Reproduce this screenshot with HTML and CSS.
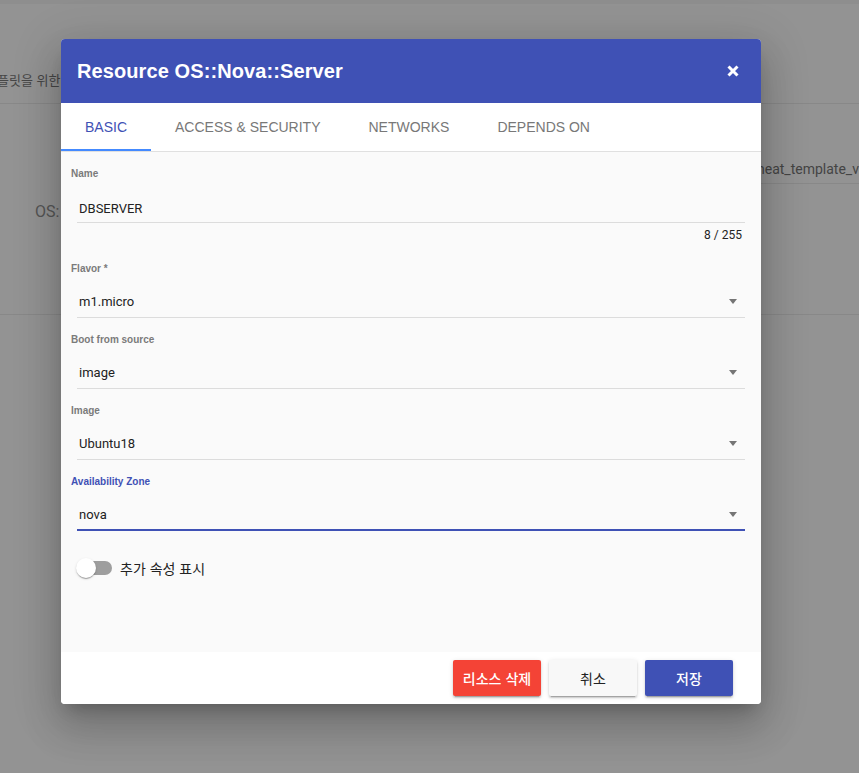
FILE: index.html
```html
<!DOCTYPE html>
<html lang="ko">
<head>
<meta charset="utf-8">
<title>Resource OS::Nova::Server</title>
<link rel="stylesheet" href="styles.css">
</head>
<body>
<div class="page">
  <div class="topband"></div>
  <div class="row1"><span class="bg-text-kr">플릿을 위한</span></div>
  <div class="section2">
    <div class="os-label">OS:</div>
    <div class="heat-field">heat_template_version</div>
  </div>
</div>

<div class="modal">
  <div class="modal-header">
    <div class="modal-title">Resource OS::Nova::Server</div>
    <svg class="close-icon" width="12" height="12" viewBox="0 0 12 12" aria-hidden="true">
      <path d="M1.5 1.5 L10.5 10.5 M10.5 1.5 L1.5 10.5" stroke="#ffffff" stroke-width="3" stroke-linecap="butt"/>
    </svg>
  </div>
  <div class="tabs">
    <div class="tab active">BASIC</div>
    <div class="tab">ACCESS &amp; SECURITY</div>
    <div class="tab">NETWORKS</div>
    <div class="tab">DEPENDS ON</div>
  </div>
  <div class="modal-body">
    <div class="field field-name">
      <div class="label">Name</div>
      <div class="input input-name"><span class="value">DBSERVER</span></div>
      <div class="counter">8 / 255</div>
    </div>
    <div class="field">
      <div class="label">Flavor *</div>
      <div class="input"><span class="value">m1.micro</span><span class="arrow"></span></div>
    </div>
    <div class="field">
      <div class="label">Boot from source</div>
      <div class="input"><span class="value">image</span><span class="arrow"></span></div>
    </div>
    <div class="field">
      <div class="label">Image</div>
      <div class="input"><span class="value">Ubuntu18</span><span class="arrow"></span></div>
    </div>
    <div class="field">
      <div class="label label-focus">Availability Zone</div>
      <div class="input input-focus"><span class="value">nova</span><span class="arrow"></span></div>
    </div>
    <div class="switch-row">
      <div class="switch-track"><div class="switch-thumb"></div></div>
      <span class="switch-label">추가 속성 표시</span>
    </div>
  </div>
  <div class="modal-footer">
    <button class="btn btn-red">리소스 삭제</button>
    <button class="btn btn-light">취소</button>
    <button class="btn btn-blue">저장</button>
  </div>
</div>
</body>
</html>
```

FILE: styles.css
```css
html, body {
  margin: 0;
  padding: 0;
}
body {
  width: 859px;
  height: 773px;
  overflow: hidden;
  background: #939393;
  font-family: "Liberation Sans", Arial, sans-serif;
  position: relative;
}
.page {
  width: 859px;
}
.topband {
  height: 4px;
  background: #8e8e8e;
}
.row1 {
  height: 100px;
  box-sizing: border-box;
  padding-top: 64px;
  border-bottom: 1px solid #888888;
  white-space: nowrap;
  overflow: hidden;
}
.bg-text-kr {
  display: block;
  margin-left: -3px;
  line-height: 24px;
  font-family: "Noto Sans CJK KR", sans-serif;
  font-size: 13px;
  color: #464646;
}
.section2 {
  height: 211px;
  box-sizing: border-box;
  border-bottom: 1px solid #888888;
  display: flex;
  align-items: flex-start;
  overflow: hidden;
}
.os-label {
  margin-left: 35px;
  margin-top: 96px;
  line-height: 24px;
  font-size: 16px;
  font-family: Roboto, sans-serif;
  color: #555555;
  white-space: nowrap;
}
.heat-field {
  margin-left: auto;
  margin-top: 55px;
  width: 111px;
  flex: none;
  box-sizing: border-box;
  padding-left: 9px;
  padding-bottom: 4px;
  line-height: 20px;
  font-family: Roboto, sans-serif;
  font-size: 14px;
  color: #444444;
  white-space: nowrap;
  overflow: hidden;
  border-bottom: 1px solid #888888;
}

/* modal */
.modal {
  position: absolute;
  left: 61px;
  top: 39px;
  width: 700px;
  border-radius: 4px;
  overflow: hidden;
  background: #ffffff;
  box-shadow: 0 11px 15px -7px rgba(0,0,0,.2), 0 24px 38px 3px rgba(0,0,0,.14), 0 9px 46px 8px rgba(0,0,0,.12);
}
.modal-header {
  height: 64px;
  background: #3f51b5;
  display: flex;
  align-items: center;
  justify-content: space-between;
  padding: 0 22px 0 16px;
}
.modal-title {
  color: #ffffff;
  font-weight: bold;
  font-size: 20px;
  letter-spacing: 0.1px;
  margin-top: 1px;
}
.close-icon {
  display: block;
}
.tabs {
  height: 48px;
  background: #ffffff;
  border-bottom: 1px solid #e0e0e0;
  display: flex;
}
.tab {
  height: 48px;
  box-sizing: border-box;
  padding: 0 24px;
  display: flex;
  align-items: center;
  font-size: 14px;
  color: #787878;
  border-bottom: 2px solid transparent;
  padding-top: 2px;
}
.tab.active {
  color: #3f51b5;
  border-bottom-color: #448aff;
}
.modal-body {
  height: 500px;
  box-sizing: border-box;
  background: #fafafa;
  padding: 16px 16px 0 10px;
}
.field {
  margin-bottom: 16px;
}
.field-name {
  margin-bottom: 21px;
}
.label {
  height: 12px;
  line-height: 12px;
  font-size: 10px;
  font-weight: bold;
  color: #7a7a7a;
}
.label-focus {
  color: #3f51b5;
}
.input {
  margin-left: 6px;
  display: flex;
  align-items: center;
  padding: 19px 0 7px 2px;
  border-bottom: 1px solid #dcdcdc;
}
.input-name {
  padding-top: 21px;
  padding-bottom: 5px;
}
.input-focus {
  padding-bottom: 6px;
  border-bottom: 2px solid #3f51b5;
}
.value {
  flex: 1;
  line-height: 16px;
  font-family: Roboto, sans-serif;
  font-size: 13px;
  color: #222222;
}
.arrow {
  width: 0;
  height: 0;
  border-left: 4.5px solid transparent;
  border-right: 4.5px solid transparent;
  border-top: 5px solid #757575;
  margin-right: 8px;
  margin-top: -1px;
}
.counter {
  margin-top: 5px;
  line-height: 14px;
  text-align: right;
  padding-right: 3px;
  font-family: Roboto, sans-serif;
  font-size: 12px;
  color: #222222;
}
.switch-row {
  margin-top: 25px;
  margin-left: 6px;
  height: 24px;
  display: flex;
  align-items: center;
}
.switch-track {
  width: 34px;
  height: 14px;
  border-radius: 7px;
  background: #9e9e9e;
  display: flex;
  align-items: center;
  margin-left: 1px;
}
.switch-thumb {
  width: 20px;
  height: 20px;
  border-radius: 50%;
  background: #ffffff;
  flex: none;
  margin-left: -2px;
  box-shadow: 0 2px 1px -1px rgba(0,0,0,.2), 0 1px 1px 0 rgba(0,0,0,.14), 0 1px 3px 0 rgba(0,0,0,.12);
}
.switch-label {
  margin-left: 8px;
  line-height: 20px;
  font-family: "Noto Sans CJK KR", sans-serif;
  font-size: 14px;
  color: #222222;
}
.modal-footer {
  height: 52px;
  box-sizing: border-box;
  background: #ffffff;
  display: flex;
  justify-content: flex-end;
  align-items: center;
  gap: 8px;
  padding: 0 28px 0 0;
}
.btn {
  width: 88px;
  height: 36px;
  border: none;
  border-radius: 2px;
  font-family: "Noto Sans CJK KR", sans-serif;
  font-size: 14px;
  font-weight: 500;
  padding: 0;
  box-shadow: 0 3px 1px -2px rgba(0,0,0,.2), 0 2px 2px 0 rgba(0,0,0,.14), 0 1px 5px 0 rgba(0,0,0,.12);
}
.btn-red {
  background: #f44336;
  color: #ffffff;
}
.btn-light {
  background: #f8f8f8;
  color: #222222;
  font-weight: 400;
}
.btn-blue {
  background: #3f51b5;
  color: #ffffff;
}
```
